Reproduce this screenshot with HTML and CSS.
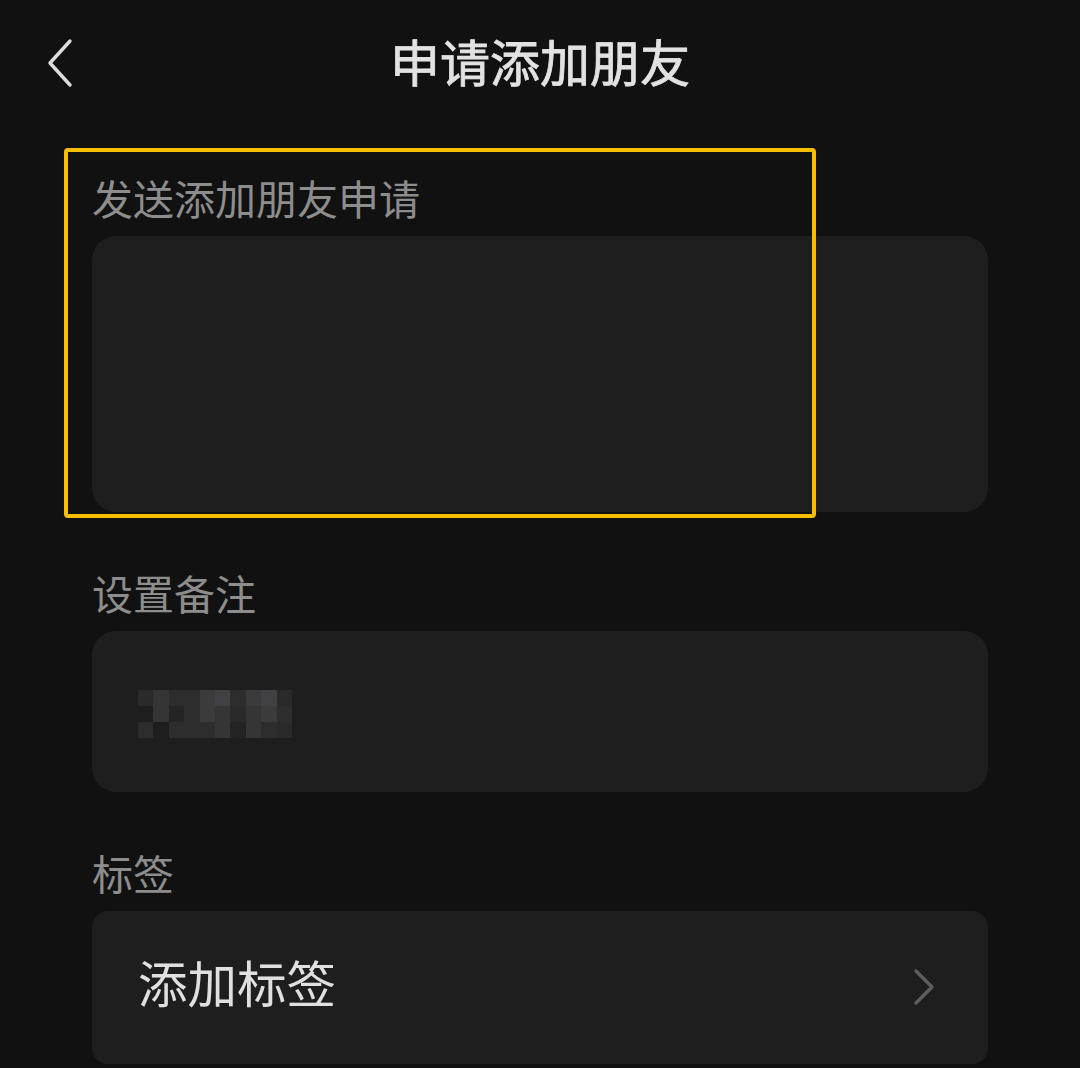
FILE: index.html
```html
<!DOCTYPE html>
<html lang="zh-CN">
<head>
<meta charset="utf-8">
<title>申请添加朋友</title>
<link rel="stylesheet" href="styles.css">
</head>
<body>
<div class="page">
  <header class="topbar">
    <button class="back" aria-label="返回">
      <svg width="40" height="60" viewBox="0 0 40 60"><path d="M23 11 L3 33 L23 55" fill="none" stroke="#dcdcdc" stroke-width="3.4" stroke-linecap="round" stroke-linejoin="round"/></svg>
    </button>
    <h1 class="title">申请添加朋友</h1>
  </header>

  <main class="content">
    <section class="field first">
      <div class="label">发送添加朋友申请</div>
      <div class="box textarea"></div>
    </section>

    <section class="field">
      <div class="label">设置备注</div>
      <div class="box input">
        <div class="mosaic">
          <i class="m2"></i><i class="m4"></i><i class="m3"></i><i class="m3"></i><i class="m5"></i><i class="m6"></i><i class="m3"></i><i class="m5"></i><i class="m6"></i><i class="m2"></i>
          <i class="m0"></i><i class="m4"></i><i class="m1"></i><i class="m3"></i><i class="m5"></i><i class="m4"></i><i class="m2"></i><i class="m4"></i><i class="m5"></i><i class="m3"></i>
          <i class="m3"></i><i class="m0"></i><i class="m3"></i><i class="m3"></i><i class="m3"></i><i class="m4"></i><i class="m1"></i><i class="m4"></i><i class="m3"></i><i class="m2"></i>
        </div>
      </div>
    </section>

    <section class="field">
      <div class="label">标签</div>
      <div class="box row">
        <span class="row-text">添加标签</span>
        <svg class="chev" width="24" height="40" viewBox="0 0 24 40"><path d="M4 3 L20 19 L4 35" fill="none" stroke="#5e5e5e" stroke-width="3.4" stroke-linecap="round" stroke-linejoin="round"/></svg>
      </div>
    </section>
  </main>

  <div class="highlight"></div>
</div>
</body>
</html>
```

FILE: styles.css
```css
html, body {
  margin: 0;
  padding: 0;
  background: #111111;
}

body {
  font-family: "Noto Sans CJK SC", "Noto Sans", sans-serif;
  width: 1080px;
  height: 1068px;
  overflow: hidden;
}

.page {
  position: relative;
  width: 1080px;
  height: 1068px;
}

.topbar {
  position: relative;
  height: 130px;
  box-sizing: border-box;
  padding-bottom: 10px;
  display: flex;
  align-items: center;
  justify-content: center;
}

.back {
  position: absolute;
  left: 47px;
  top: 30px;
  padding: 0;
  border: 0;
  background: none;
  width: 40px;
  height: 60px;
}

.back svg {
  display: block;
}

.title {
  margin: 0;
  font-size: 50px;
  line-height: 50px;
  font-weight: 400;
  color: #e2e2e2;
  letter-spacing: 0;
  -webkit-text-stroke: 0.8px #e2e2e2;
}

.content {
  padding: 0 92px;
  display: flex;
  flex-direction: column;
}

.field {
  display: flex;
  flex-direction: column;
  gap: 16px;
  margin-top: 63px;
}

.field.first {
  margin-top: 50px;
}

.label {
  font-size: 41px;
  line-height: 34px;
  height: 34px;
  padding-bottom: 6px;
  color: #8d8d8d;
}

.box {
  background: #1e1e1e;
  border-radius: 24px;
  width: 896px;
}

.textarea {
  height: 276px;
}

.input {
  height: 161px;
  display: flex;
  align-items: center;
  padding-left: 46px;
  box-sizing: border-box;
}

.mosaic {
  display: grid;
  grid-template-columns: repeat(10, 15.4px);
  grid-template-rows: repeat(3, 16px);
  margin-top: 5px;
}

.mosaic i {
  display: block;
}

.m0 { background: #1e1e1e; }
.m1 { background: #242424; }
.m2 { background: #2a2a2a; }
.m3 { background: #2d2d2d; }
.m4 { background: #353535; }
.m5 { background: #3b3b3b; }
.m6 { background: #414145; }

.row {
  height: 153px;
  border-radius: 16px;
  display: flex;
  align-items: center;
  justify-content: space-between;
  padding: 0 52px 0 46px;
  box-sizing: border-box;
}

.row-text {
  font-size: 49.5px;
  line-height: 50px;
  padding-bottom: 12px;
  color: #e0e0e0;
}

.chev {
  display: block;
}

.highlight {
  position: absolute;
  left: 64px;
  top: 148px;
  width: 752px;
  height: 370px;
  box-sizing: border-box;
  border: 4px solid #f7be00;
  border-radius: 4px;
  pointer-events: none;
}
```
